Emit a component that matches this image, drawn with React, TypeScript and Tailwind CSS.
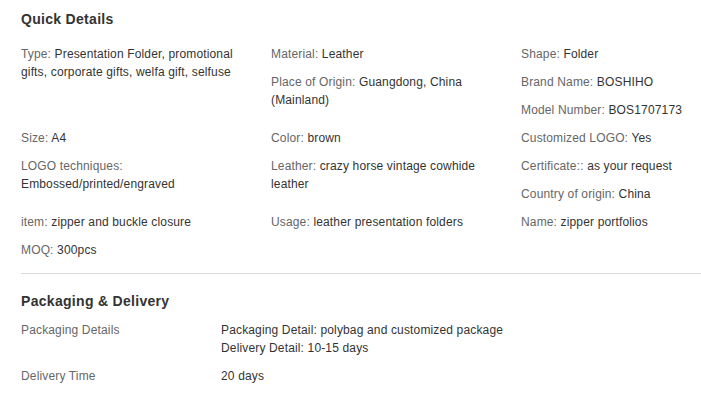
type Item = { label: string; value: string };

const rows: Item[][][] = [
  [
    [{ label: 'Type:', value: 'Presentation Folder, promotional gifts, corporate gifts, welfa gift, selfuse' }],
    [
      { label: 'Material:', value: 'Leather' },
      { label: 'Place of Origin:', value: 'Guangdong, China (Mainland)' },
    ],
    [
      { label: 'Shape:', value: 'Folder' },
      { label: 'Brand Name:', value: 'BOSHIHO' },
      { label: 'Model Number:', value: 'BOS1707173' },
    ],
  ],
  [
    [{ label: 'Size:', value: 'A4' }],
    [{ label: 'Color:', value: 'brown' }],
    [{ label: 'Customized LOGO:', value: 'Yes' }],
  ],
  [
    [{ label: 'LOGO techniques:', value: 'Embossed/printed/engraved' }],
    [{ label: 'Leather:', value: 'crazy horse vintage cowhide leather' }],
    [
      { label: 'Certificate::', value: 'as your request' },
      { label: 'Country of origin:', value: 'China' },
    ],
  ],
  [
    [{ label: 'item:', value: 'zipper and buckle closure' }],
    [{ label: 'Usage:', value: 'leather presentation folders' }],
    [{ label: 'Name:', value: 'zipper portfolios' }],
  ],
  [[{ label: 'MOQ:', value: '300pcs' }], [], []],
];

function Detail({ item }: { item: Item }) {
  return (
    <p className="text-[#333]">
      <span className="text-[#666]">{item.label}</span> {item.value}
    </p>
  );
}

export default function App() {
  return (
    <div className="min-h-[403px] bg-white pl-[21px] pt-[9px] text-[12px] leading-[18px] tracking-[0.15px] font-['Liberation_Sans',Arial,sans-serif]">
      {/* Quick Details */}
      <h2 className="text-[14px] leading-[20px] font-bold tracking-[0.3px] text-[#333]">Quick Details</h2>
      <div className="mt-[16px] flex flex-col gap-[10px]">
        {rows.map((row, i) => (
          <div key={i} className="grid grid-cols-[250px_250px_180px]">
            {row.map((col, j) => (
              <div key={j} className={j < 2 ? 'flex flex-col gap-[10px] pr-5' : 'flex flex-col gap-[10px]'}>
                {col.map((item) => (
                  <Detail key={item.label} item={item} />
                ))}
              </div>
            ))}
          </div>
        ))}
      </div>

      <div className="mt-[14px] h-px bg-[#d9d9d9]" />

      {/* Packaging & Delivery */}
      <h2 className="mt-[17px] text-[14px] leading-[20px] font-bold tracking-[0.3px] text-[#333]">Packaging &amp; Delivery</h2>
      <div className="mt-[10px] flex flex-col gap-[10px]">
        <div className="flex">
          <div className="w-[200px] text-[#666]">Packaging Details</div>
          <div className="text-[#333]">
            <p>Packaging Detail: polybag and customized package</p>
            <p>Delivery Detail: 10-15 days</p>
          </div>
        </div>
        <div className="flex">
          <div className="w-[200px] text-[#666]">Delivery Time</div>
          <div className="text-[#333]">20 days</div>
        </div>
      </div>
    </div>
  );
}
